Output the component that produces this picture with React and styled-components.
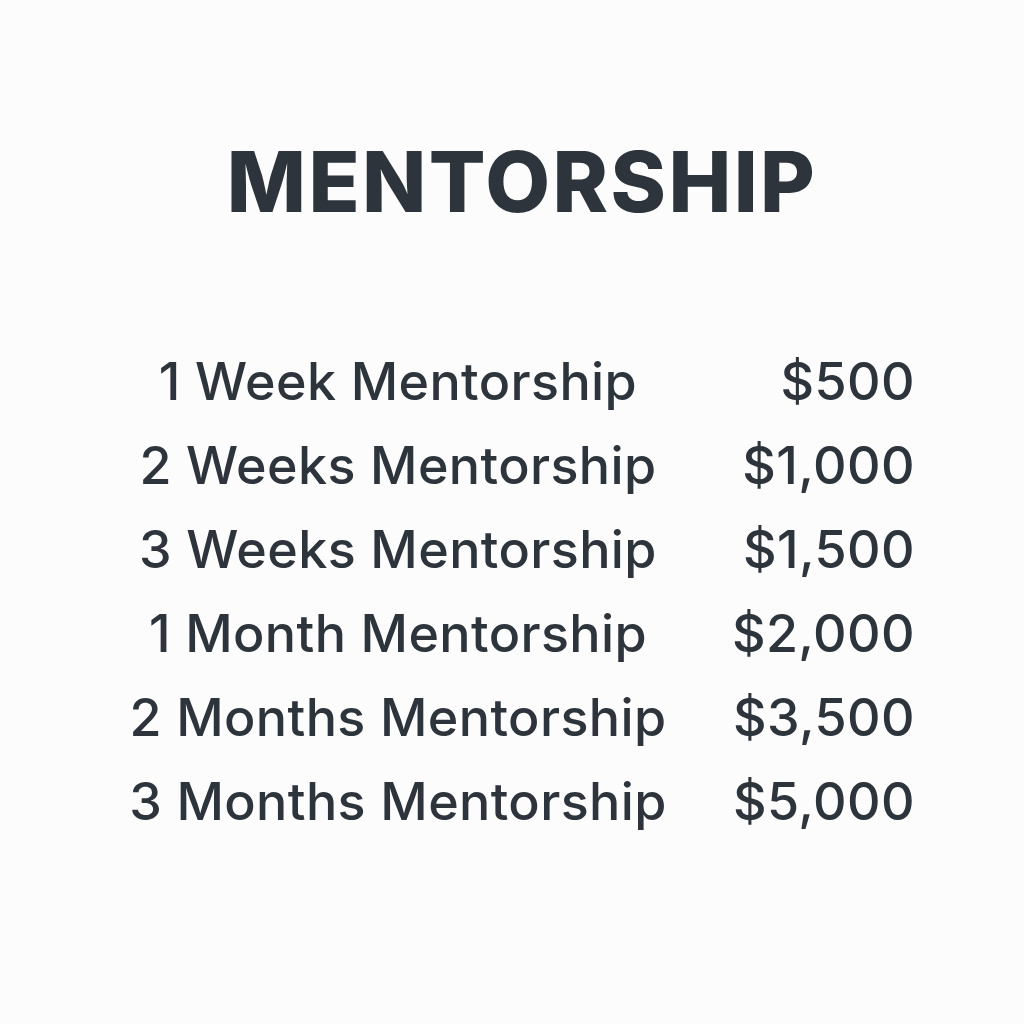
import React from "react";
import styled, { createGlobalStyle } from "styled-components";

const Global = createGlobalStyle`
  html, body { margin: 0; padding: 0; background: #fcfcfc; }
  body { font-family: Inter, "Open Sans", sans-serif; color: #2d343b; }
`;

const Page = styled.main`
  width: 1024px;
  height: 1024px;
  box-sizing: border-box;
  padding-top: 136px;
  display: flex;
  flex-direction: column;
  align-items: center;
`;

const Title = styled.h1`
  margin: 0 0 0 20px;
  font-family: Inter, sans-serif;
  font-weight: 800;
  font-size: 84px;
  line-height: 92px;
  letter-spacing: 2.4px;
  color: #2d343b;
`;

const PriceList = styled.div`
  align-self: flex-start;
  margin-top: 112px;
  margin-left: 120px;
  display: grid;
  grid-template-columns: 556px 239px;
`;

const Label = styled.div`
  font-size: 52px;
  font-weight: 500;
  line-height: 84px;
  letter-spacing: 0.4px;
  text-align: center;
  color: #2d343b;
`;

const Price = styled(Label)`
  text-align: right;
`;

const rows = [
  ["1 Week Mentorship", "$500"],
  ["2 Weeks Mentorship", "$1,000"],
  ["3 Weeks Mentorship", "$1,500"],
  ["1 Month Mentorship", "$2,000"],
  ["2 Months Mentorship", "$3,500"],
  ["3 Months Mentorship", "$5,000"],
];

export default function App() {
  return (
    <>
      <Global />
      <Page>
        <Title>MENTORSHIP</Title>
        <PriceList>
          {rows.map(([l, p]) => (
            <React.Fragment key={l}>
              <Label>{l}</Label>
              <Price>{p}</Price>
            </React.Fragment>
          ))}
        </PriceList>
      </Page>
    </>
  );
}
